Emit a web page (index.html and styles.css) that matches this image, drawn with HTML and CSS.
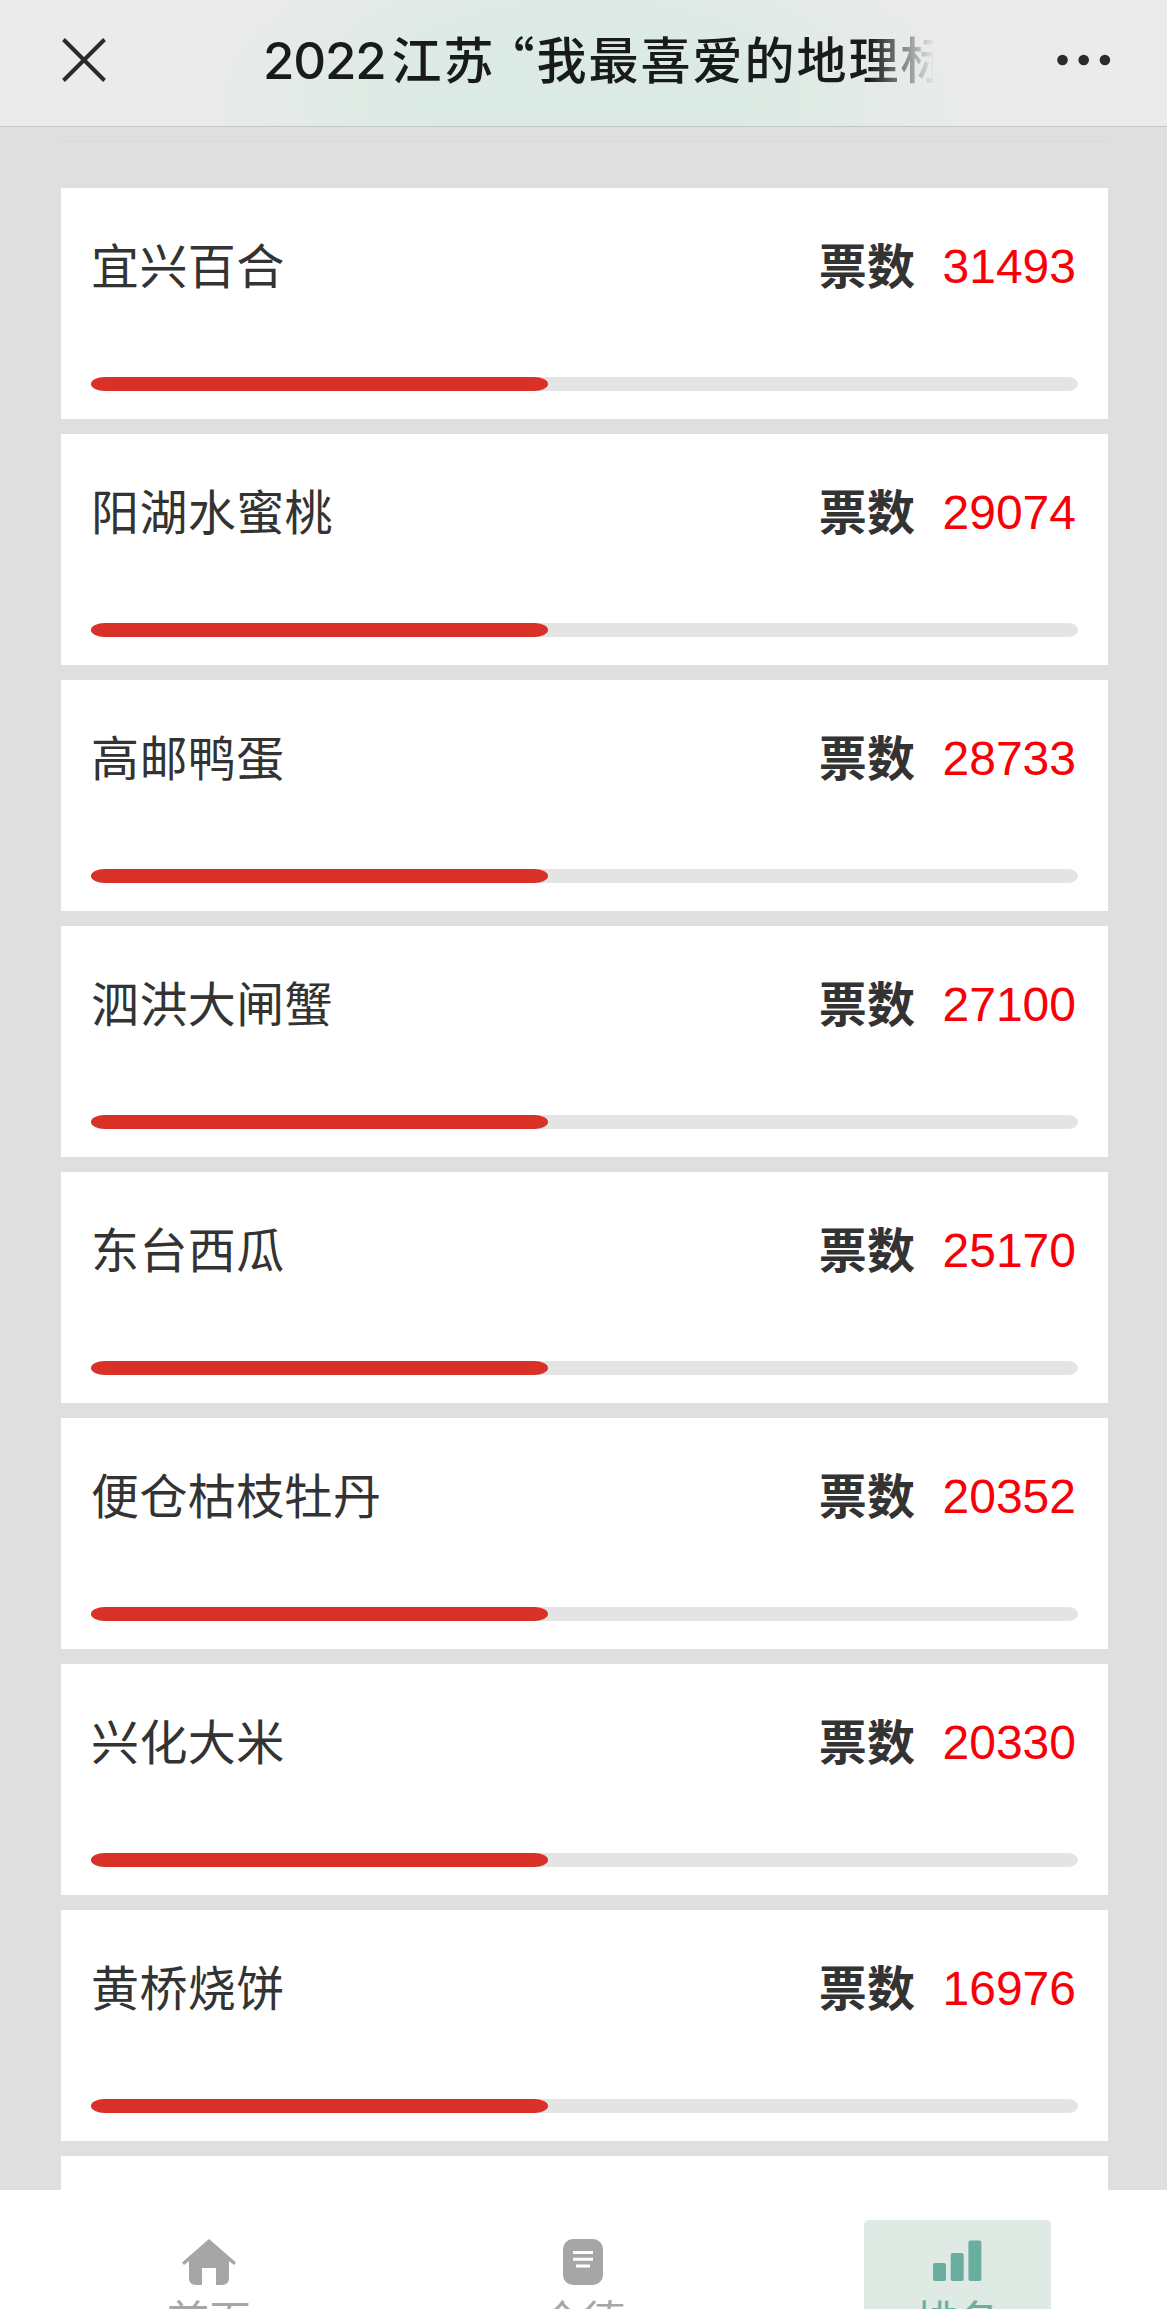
FILE: index.html
```
<!DOCTYPE html>
<html lang="zh-CN">
<head>
<meta charset="utf-8">
<title>2022江苏“我最喜爱的地理标志”</title>
<link rel="stylesheet" href="styles.css">
</head>
<body>
<header class="topbar">
  <svg class="close" viewBox="0 0 44 44"><path d="M1.5 1.5 42.5 42.5M42.5 1.5 1.5 42.5"/></svg>
  <h1 class="title"><span class="year">2022</span>江苏<span class="quote">“</span>我最喜爱的地理标</h1>
  <svg class="more" viewBox="0 0 54 12"><circle cx="5.5" cy="6" r="5.3"/><circle cx="26.7" cy="6" r="5.3"/><circle cx="47.9" cy="6" r="5.3"/></svg>
</header>
<main class="list">
  <div class="rule"></div>
  <section class="card"><div class="row"><span class="name">宜兴百合</span><b class="label">票数</b><span class="votes">31493</span></div><div class="track"><div class="fill"></div></div></section>
  <section class="card"><div class="row"><span class="name">阳湖水蜜桃</span><b class="label">票数</b><span class="votes">29074</span></div><div class="track"><div class="fill"></div></div></section>
  <section class="card"><div class="row"><span class="name">高邮鸭蛋</span><b class="label">票数</b><span class="votes">28733</span></div><div class="track"><div class="fill"></div></div></section>
  <section class="card"><div class="row"><span class="name">泗洪大闸蟹</span><b class="label">票数</b><span class="votes">27100</span></div><div class="track"><div class="fill"></div></div></section>
  <section class="card"><div class="row"><span class="name">东台西瓜</span><b class="label">票数</b><span class="votes">25170</span></div><div class="track"><div class="fill"></div></div></section>
  <section class="card"><div class="row"><span class="name">便仓枯枝牡丹</span><b class="label">票数</b><span class="votes">20352</span></div><div class="track"><div class="fill"></div></div></section>
  <section class="card"><div class="row"><span class="name">兴化大米</span><b class="label">票数</b><span class="votes">20330</span></div><div class="track"><div class="fill"></div></div></section>
  <section class="card"><div class="row"><span class="name">黄桥烧饼</span><b class="label">票数</b><span class="votes">16976</span></div><div class="track"><div class="fill"></div></div></section>
  <section class="card"></section>
</main>
<nav class="tabs">
  <a class="tab"><svg class="icon" viewBox="0 0 56 46"><path d="M28 0 55 23.5 53 26 48 22V39Q48 46 41 46H35V29H21V46H15Q8 46 8 39V22L3 26 1 23.5Z"/></svg>首页</a>
  <a class="tab"><svg class="icon" viewBox="0 0 56 46"><rect x="8" width="40" height="46" rx="10"/><path class="lines" d="M18 13.5H38M18 20.3H38M21 27H35"/></svg>介德</a>
  <a class="tab active"><svg class="icon" viewBox="0 0 56 46"><rect x="4" y="24" width="13" height="18" rx="2"/><rect x="21.7" y="14" width="13" height="28" rx="2"/><rect x="39.4" y="1.5" width="13" height="40.5" rx="2"/></svg>排名</a>
</nav>
</body>
</html>
```
FILE: styles.css
```
* { box-sizing: border-box; }
body {
  margin: 0;
  height: 2309px;
  overflow: hidden;
  display: flex;
  flex-direction: column;
  background: #dfdfdf;
  color: #333;
  font-family: "Liberation Sans", "Noto Sans CJK SC", sans-serif;
}
.topbar {
  flex: none;
  height: 127px;
  padding: 0 56px 7px 62px;
  display: flex;
  align-items: center;
  background: radial-gradient(ellipse 390px 190px at 585px 105px, #dbeae4 0%, #dbeae4 35%, #e1eae6 65%, #ebebeb 100%) #ebebeb;
  border-bottom: 1px solid #c3c7c6;
}
.close { width: 44px; height: 44px; fill: none; stroke: #2b2b2b; stroke-width: 4; }
.title {
  margin: 0 auto 2px 157px;
  width: 670px;
  overflow: hidden;
  white-space: nowrap;
  font: 500 50px/76px "Noto Sans CJK SC", sans-serif;
  letter-spacing: 2px;
  color: #191b1a;
  -webkit-mask-image: linear-gradient(to right, #000 606px, transparent 672px);
  mask-image: linear-gradient(to right, #000 606px, transparent 672px);
}
.year { font-family: Inter, sans-serif; font-size: 51px; letter-spacing: -1.2px; margin-right: 6px; }
.quote { margin-left: -11px; }
.more { width: 54px; height: 12px; fill: #2b2b2b; }
.list {
  flex: none;
  height: 2063px;
  overflow: hidden;
  padding: 13px 59px 0 61px;
  display: flex;
  flex-direction: column;
  gap: 15px;
}
.rule { flex: none; height: 2px; margin: 0 -2px 31px -4px; background: #dcdcdc; }
.card {
  flex: none;
  height: 231px;
  padding: 45px 30px 28px;
  background: #fff;
  display: flex;
  flex-direction: column;
  justify-content: space-between;
}
.row { display: flex; align-items: flex-start; height: 70px; line-height: 70px; font-size: 48px; }
.name { flex: 1; letter-spacing: .4px; }
.label { letter-spacing: .4px; }
.votes { margin: 0 2px 0 27px; line-height: 68px; color: #f80008; }
.track { height: 14px; border-radius: 14px 10px 10px 14px / 7px; background: #e4e4e4; }
.fill { width: 457px; height: 14px; border-radius: 14px / 7px; background: #d93028; }
.tabs {
  flex: none;
  height: 119px;
  padding: 30px 0 0 22px;
  display: grid;
  grid-template-columns: repeat(3, 374px);
  justify-items: center;
  background: #fff;
}
.tab {
  width: 187px;
  height: 150px;
  padding-top: 19px;
  display: flex;
  flex-direction: column;
  align-items: center;
  border-radius: 5px;
  font-size: 42px;
  line-height: 60px;
  color: #a6a6a6;
}
.icon { width: 56px; height: 46px; margin-bottom: 7px; fill: currentColor; }
.lines { stroke: #fff; stroke-width: 3; }
.active { background: #dfeae5; color: #6aaea0; }
```
